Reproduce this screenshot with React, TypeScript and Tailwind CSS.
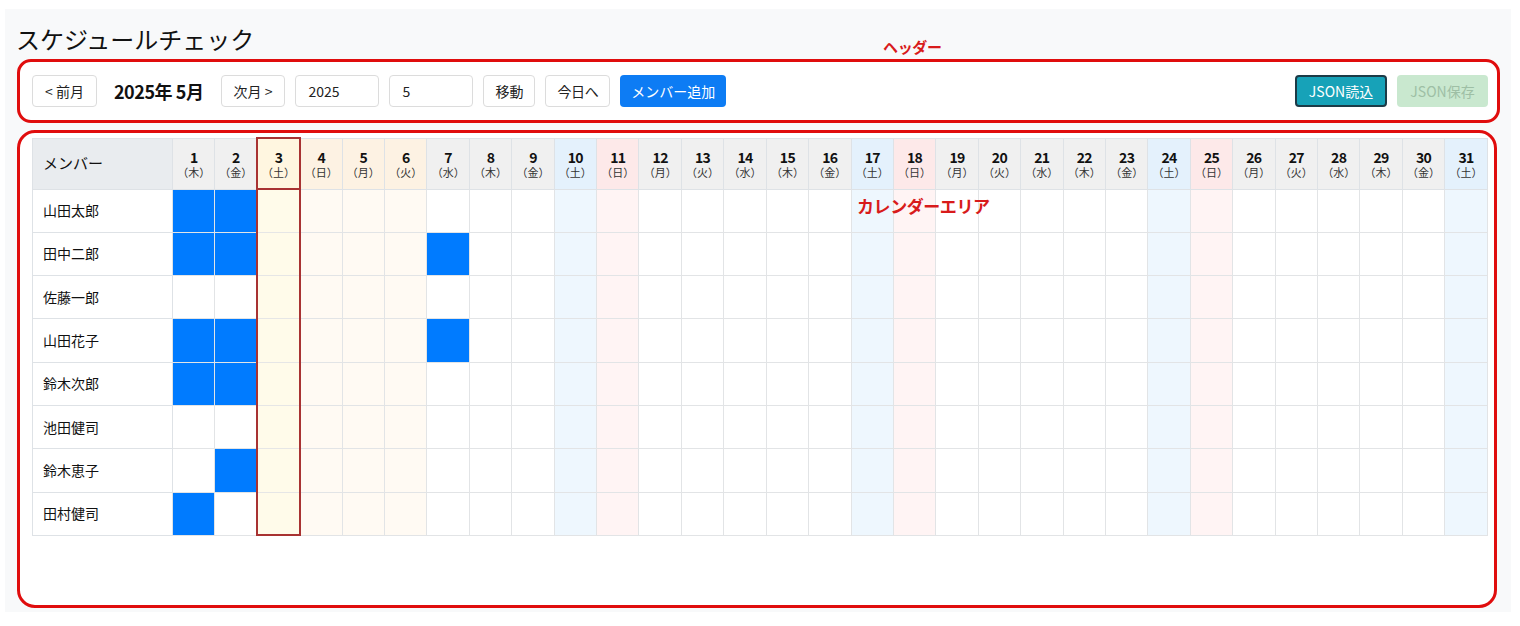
import React from 'react';

const FONT = { fontFamily: '"Noto Sans CJK JP", "Noto Sans", "Liberation Sans", sans-serif' };

const WEEK = ['日', '月', '火', '水', '木', '金', '土'];
const HOLIDAYS = [4, 5, 6];
const TODAY = 3;

const members: { name: string; days: number[] }[] = [
  { name: '山田太郎', days: [1, 2] },
  { name: '田中二郎', days: [1, 2, 7] },
  { name: '佐藤一郎', days: [] },
  { name: '山田花子', days: [1, 2, 7] },
  { name: '鈴木次郎', days: [1, 2] },
  { name: '池田健司', days: [] },
  { name: '鈴木恵子', days: [2] },
  { name: '田村健司', days: [1] },
];

const days = Array.from({ length: 31 }, (_, i) => i + 1);

type Kind = 'today' | 'holiday' | 'sat' | 'sun' | 'normal';

const kindOf = (d: number): Kind => {
  if (d === TODAY) return 'today';
  if (HOLIDAYS.includes(d)) return 'holiday';
  const w = (d + 3) % 7;
  if (w === 6) return 'sat';
  if (w === 0) return 'sun';
  return 'normal';
};

const headBg: Record<Kind, string> = {
  today: 'bg-[#fff6e0]',
  holiday: 'bg-[#fdf2e3]',
  sat: 'bg-[#e4f1fc]',
  sun: 'bg-[#fde9e9]',
  normal: 'bg-[#f0f0f0]',
};

const bodyBg: Record<Kind, string> = {
  today: 'bg-[#fffbea]',
  holiday: 'bg-[#fffaf3]',
  sat: 'bg-[#eef7fe]',
  sun: 'bg-[#fff4f4]',
  normal: 'bg-white',
};

const btn = 'h-8 px-[12px] rounded-[4px] border border-[#dcdcdc] bg-white text-[14px] text-[#222] flex items-center';

export default function App() {
  return (
    <div className="w-[1520px] h-[626px] bg-white" style={FONT}>
      <div className="ml-[5px] mt-[9px] w-[1506px] bg-[#f8f9fa] pl-[12px] pb-[4px]">
        <h1 className="pt-[10px] h-[50px] leading-[40px] text-[24px] text-[#111] ml-[-1px]">スケジュールチェック</h1>

        {/* header */}
        <div className="relative w-[1483px] h-[64px] bg-white border-[3px] border-[#e00d0d] rounded-[14px] flex items-center pl-[12px] pr-[9px]">
          <span className="absolute left-[863px] top-[-26px] text-[15px] font-bold text-[#d81b1b] tracking-tight">ヘッダー</span>
          <div className="flex items-center gap-[10px]">
            <button className={btn}>&lt; 前月</button>
            <span className="mx-[7px] text-[18px] font-bold text-[#111] tracking-tight">2025年 5月</span>
            <button className={btn}>次月 &gt;</button>
            <div className="w-[84px] h-8 rounded-[4px] border border-[#dcdcdc] px-[12px] flex items-center text-[14px] text-[#222]">2025</div>
            <div className="w-[84px] h-8 rounded-[4px] border border-[#dcdcdc] px-[12px] flex items-center text-[14px] text-[#222]">5</div>
            <button className="h-8 px-[11px] rounded-[4px] border border-[#dcdcdc] bg-white text-[14px] text-[#222] flex items-center">移動</button>
            <button className="h-8 px-[11px] rounded-[4px] border border-[#dcdcdc] bg-white text-[14px] text-[#222] flex items-center tracking-tight">今日へ</button>
            <button className="h-8 px-[11px] rounded-[4px] bg-[#0d7cf4] text-white text-[14px] flex items-center">メンバー追加</button>
          </div>
          <div className="ml-auto flex items-center gap-[10px]">
            <button className="h-8 w-[92px] rounded-[4px] bg-[#17a2b8] border-2 border-[#1c3b47] text-white text-[14px] flex items-center justify-center">JSON読込</button>
            <button className="h-8 w-[91px] rounded-[4px] bg-[#c9e8cf] text-[#9ebfa5] text-[14px] flex items-center justify-center">JSON保存</button>
          </div>
        </div>

        {/* calendar */}
        <div className="relative mt-[7px] w-[1480px] h-[478px] bg-white border-[3px] border-[#e00d0d] rounded-[18px] pl-[12px] pt-[4px]">
          <span className="absolute left-[837px] top-[60px] text-[17px] font-bold text-[#d81b1b] tracking-tight z-10">カレンダーエリア</span>
          <table className="table-fixed border-collapse w-[1456px]">
            <colgroup>
              <col className="w-[140px]" />
              {days.map(d => (
                <col key={d} />
              ))}
            </colgroup>
            <thead>
              <tr className="h-[51px]">
                <th className="bg-[#e9ecef] border border-[#dee2e6] text-left pl-[10px] text-[15px] font-normal text-[#111]">メンバー</th>
                {days.map(d => {
                  const k = kindOf(d);
                  return (
                    <th
                      key={d}
                      className={`${headBg[k]} border ${k === 'today' ? 'border-2 border-[#a83232]' : 'border-[#dee2e6]'} p-0 font-normal text-[#111]`}
                    >
                      <div className="flex flex-col items-center">
                        <span className="text-[14px] leading-[16px] font-bold tracking-tighter">{d}</span>
                        <span className="text-[11px] leading-[14px] text-[#333]">（{WEEK[(d + 3) % 7]}）</span>
                      </div>
                    </th>
                  );
                })}
              </tr>
            </thead>
            <tbody>
              {members.map((m, ri) => (
                <tr key={m.name} className="h-[43.3px]">
                  <td className="border border-[#dee2e6] pl-[10px] text-[14px] text-[#111]">{m.name}</td>
                  {days.map(d => {
                    const k = kindOf(d);
                    const on = m.days.includes(d);
                    const todayCls =
                      k === 'today'
                        ? `border-x-2 border-x-[#a83232] border-y-[#e6e6e6] ${ri === members.length - 1 ? 'border-b-2 border-b-[#a83232]' : ''}`
                        : 'border-[#e2e4e6]';
                    return (
                      <td key={d} className={`border ${todayCls} ${on ? 'bg-[#007bff]' : bodyBg[k]}`} />
                    );
                  })}
                </tr>
              ))}
            </tbody>
          </table>
        </div>
      </div>
    </div>
  );
}
